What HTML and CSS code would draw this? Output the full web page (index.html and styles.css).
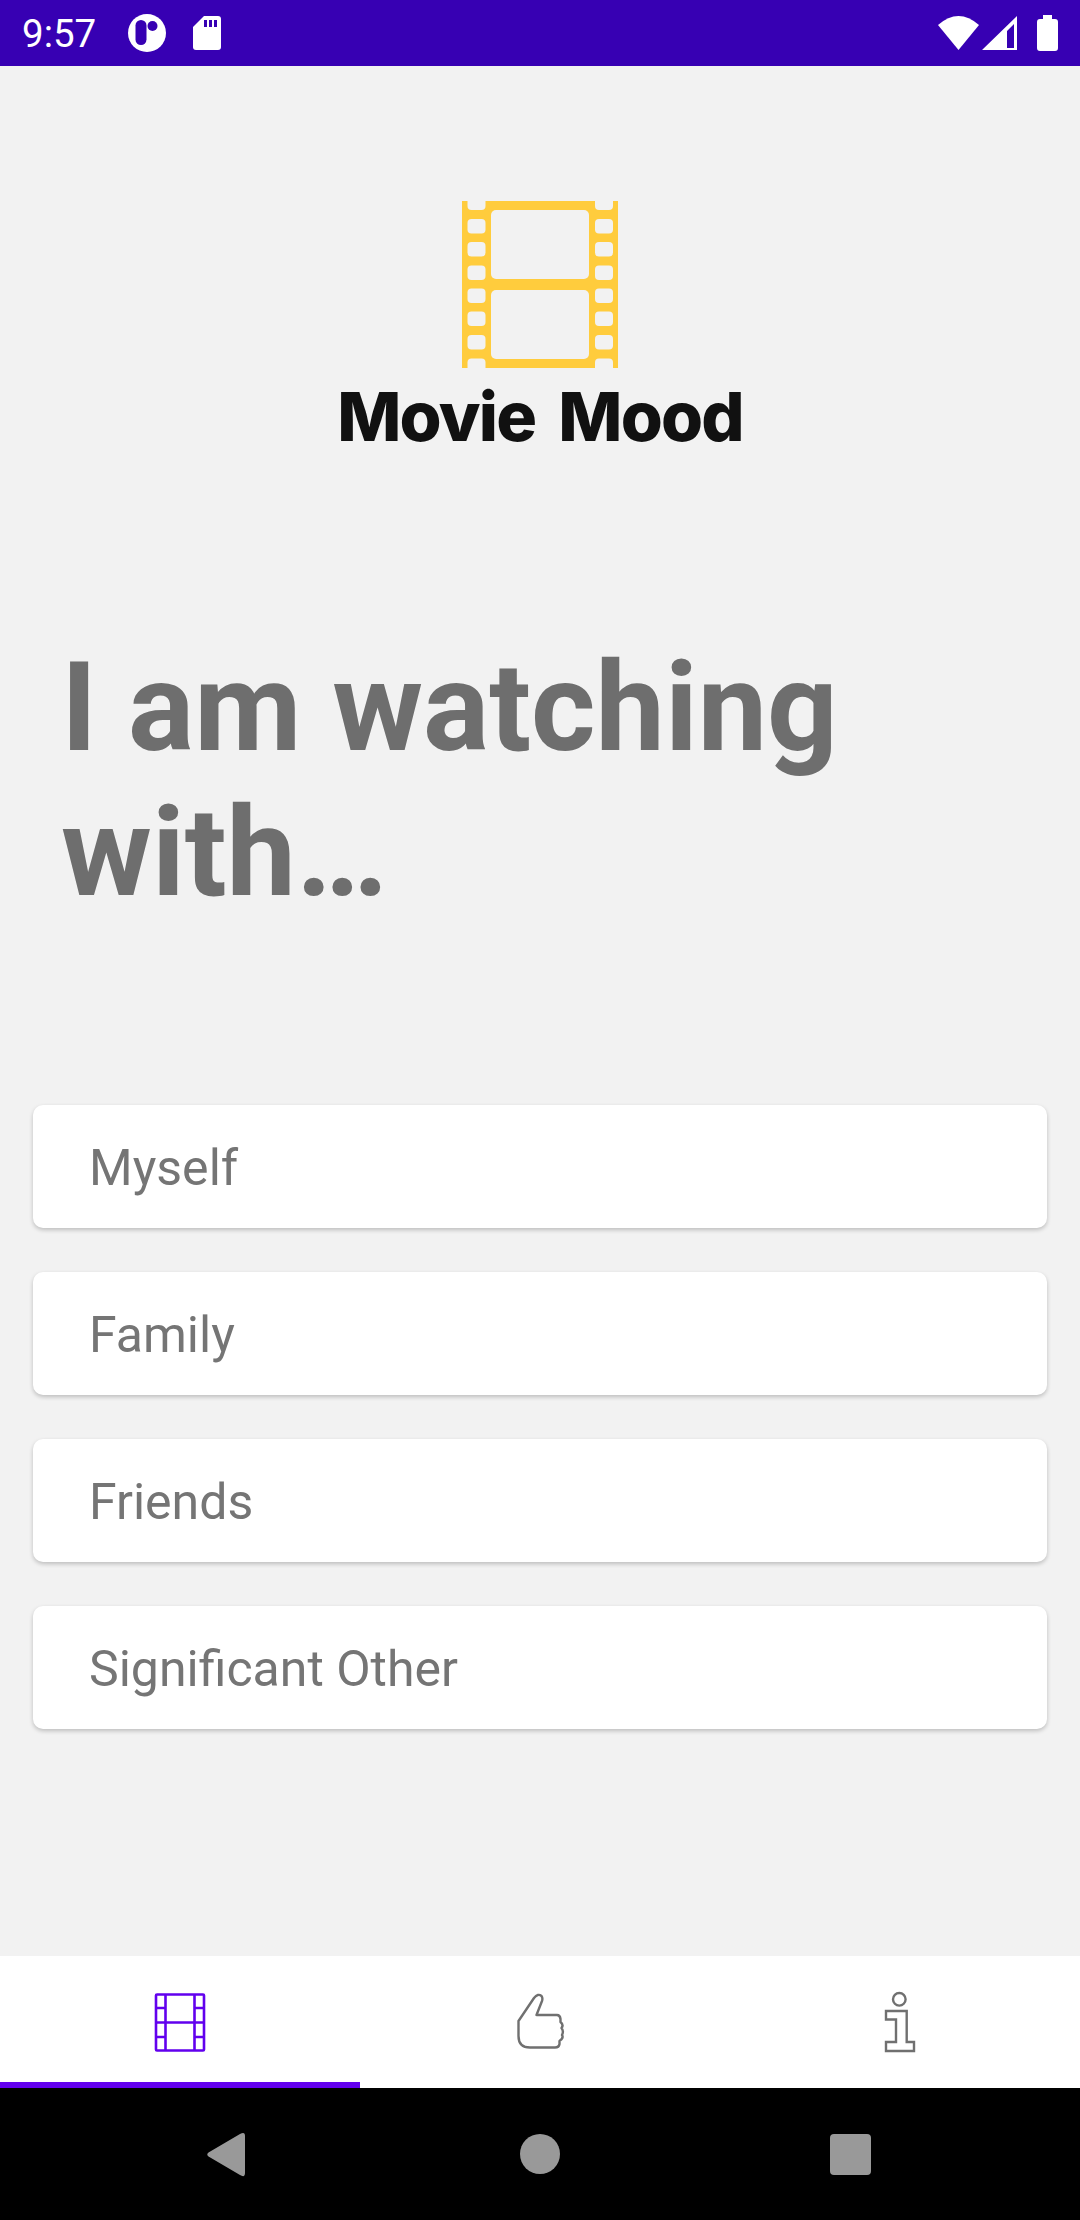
FILE: index.html
```html
<!DOCTYPE html>
<html lang="en">
<head>
    <meta charset="UTF-8">
    <meta name="viewport" content="width=device-width, initial-scale=1.0">
    <title>Movie Mood</title>
    <link rel="stylesheet" href="styles.css">
</head>
<body>
    <div class="phone">
        <div class="status-bar">
            <span class="clock">9:57</span>
            <svg class="status-icon" width="38" height="38" viewBox="0 0 38 38">
                <circle cx="19" cy="19" r="19" fill="#fff"/>
                <rect x="7.500" y="6" width="11" height="25" rx="5.500" fill="#3700b3"/>
                <circle cx="24.500" cy="12" r="5" fill="#3700b3"/>
            </svg>
            <svg class="status-icon sd-icon" width="28" height="34" viewBox="0 0 28 34">
                <path d="M11 0H25Q28 0 28 3V31Q28 34 25 34H3Q0 34 0 31V11Z" fill="#fff"/>
                <path d="M11 4h3v7h-3zM16 4h3v7h-3zM21 4h3v7h-3z" fill="#3700b3"/>
            </svg>
            <span class="status-spacer"></span>
            <svg class="status-icon" width="41" height="34" viewBox="0 0 41 34">
                <path d="M0 9Q20.500 -9 41 9L20.500 34Z" fill="#fff"/>
            </svg>
            <svg class="status-icon signal-icon" width="35" height="34" viewBox="0 0 35 34">
                <path d="M35 0V34H0ZM32 8 25 15V32H32Z" fill="#fff" fill-rule="evenodd"/>
            </svg>
            <svg class="status-icon battery-icon" width="21" height="36" viewBox="0 0 21 36">
                <path d="M6 0H15V4H18Q21 4 21 7V33Q21 36 18 36H3Q0 36 0 33V7Q0 4 3 4H6Z" fill="#fff"/>
            </svg>
        </div>

        <main class="content">
            <div class="logo">
                <svg width="156" height="167" viewBox="0 0 156 167">
                    <rect width="156" height="167" fill="#ffcc3d"/>
                    <g fill="#f2f2f2">
                        <rect x="29" y="9" width="98" height="69" rx="5"/>
                        <rect x="29" y="89" width="98" height="69" rx="5"/>
                        <rect x="5.500" y="-8" width="18" height="17" rx="4"/>
                        <rect x="5.500" y="18" width="18" height="14.500" rx="4"/>
                        <rect x="5.500" y="41" width="18" height="14.500" rx="4"/>
                        <rect x="5.500" y="64.500" width="18" height="14.500" rx="4"/>
                        <rect x="5.500" y="87.500" width="18" height="14.500" rx="4"/>
                        <rect x="5.500" y="110.500" width="18" height="14.500" rx="4"/>
                        <rect x="5.500" y="134" width="18" height="14.500" rx="4"/>
                        <rect x="5.500" y="157.500" width="18" height="17" rx="4"/>
                        <rect x="133" y="-8" width="18" height="17" rx="4"/>
                        <rect x="133" y="18" width="18" height="14.500" rx="4"/>
                        <rect x="133" y="41" width="18" height="14.500" rx="4"/>
                        <rect x="133" y="64.500" width="18" height="14.500" rx="4"/>
                        <rect x="133" y="87.500" width="18" height="14.500" rx="4"/>
                        <rect x="133" y="110.500" width="18" height="14.500" rx="4"/>
                        <rect x="133" y="134" width="18" height="14.500" rx="4"/>
                        <rect x="133" y="157.500" width="18" height="17" rx="4"/>
                    </g>
                </svg>
                <div class="logo-name">Movie Mood</div>
            </div>

            <h1 class="question">I am watching with…</h1>

            <div class="choices">
                <div class="choice">Myself</div>
                <div class="choice">Family</div>
                <div class="choice">Friends</div>
                <div class="choice">Significant Other</div>
            </div>
        </main>

        <nav class="tabs">
            <div class="tab active">
                <svg width="52" height="61" viewBox="0 0 52 61" fill="none" stroke="#6200ee" stroke-width="2.600">
                    <rect x="2" y="2.500" width="48" height="56" rx="1"/>
                    <path d="M11.500 2.500V58.500M40.500 2.500V58.500M2 30.500H50M2 16H11.500M2 45H11.500M40.500 16H50M40.500 45H50"/>
                </svg>
            </div>
            <div class="tab">
                <svg width="50" height="58" viewBox="35 33 50 58" fill="none" stroke="#707070" stroke-width="2.400" stroke-linejoin="round">
                    <path d="M38.500 61 54 38Q58 33 61.500 36 63 38 62 41L56.500 55H77Q80 55 80.500 59V62Q84 65 81.500 68 84 71 82 75 84 78 79.500 81V84Q79 87.500 75 87.500H50Q38.500 87.500 38.500 76Z"/>
                </svg>
            </div>
            <div class="tab">
                <svg width="32" height="66" viewBox="404 29 32 66" fill="none" stroke="#707070" stroke-width="2.400">
                    <circle cx="419.300" cy="39.300" r="6.300"/>
                    <path d="M406 51H426.700V82H434V91H406V82H416V59.500H406Z"/>
                </svg>
            </div>
        </nav>

        <div class="nav-bar">
            <svg width="38" height="45" viewBox="0 0 38 45"><path d="M1.500 20.500 33 2Q38 -1 38 4V41Q38 46 33 43L1.500 24.500Q-1 22.500 1.500 20.500Z" fill="#999"/></svg>
            <span class="nav-home"></span>
            <span class="nav-recent"></span>
        </div>
    </div>
</body>
</html>
```

FILE: styles.css
```css
* {
    margin: 0;
    padding: 0;
    box-sizing: border-box;
}

body {
    font-family: Roboto, sans-serif;
    background: #f2f2f2;
}

.phone {
    width: 1080px;
    height: 2220px;
    display: flex;
    flex-direction: column;
    overflow: hidden;
}

.status-bar {
    height: 66px;
    flex-shrink: 0;
    background: #3700b3;
    color: white;
    display: flex;
    align-items: center;
    padding: 0 22px 0 22px;
}

.clock {
    font-size: 38.500px;
    width: 105.500px;
}

.status-icon {
    display: block;
}

.sd-icon {
    margin-left: 27px;
}

.status-spacer {
    flex: 1;
}

.signal-icon {
    margin-left: 3px;
}

.battery-icon {
    margin-left: 20px;
}

.content {
    flex: 1;
    background: #f2f2f2;
    padding: 135px 33px 0;
}

.logo {
    display: flex;
    flex-direction: column;
    align-items: center;
}

.logo svg {
    display: block;
}

.logo-name {
    font-family: Inter, sans-serif;
    font-weight: 800;
    font-size: 68px;
    line-height: 84px;
    letter-spacing: -1.800px;
    word-spacing: 10px;
    color: #111;
    margin-top: 6px;
}

.question {
    font-size: 123.750px;
    font-weight: 700;
    line-height: 145px;
    color: #6e6e6e;
    margin: 177px 0 0 28px;
    width: 900px;
}

.choices {
    display: flex;
    flex-direction: column;
    gap: 44px;
    margin-top: 180px;
}

.choice {
    height: 123px;
    background: white;
    border-radius: 10px;
    box-shadow: 0 2px 4px rgba(0, 0, 0, 0.22);
    display: flex;
    align-items: center;
    padding: 3px 0 0 56px;
    font-size: 50px;
    color: #757575;
}

.tabs {
    height: 132px;
    flex-shrink: 0;
    background: white;
    display: flex;
}

.tab {
    flex: 1;
    display: flex;
    align-items: center;
    justify-content: center;
}

.tab.active {
    padding-top: 6px;
    border-bottom: 6px solid #6200ee;
}

.nav-bar {
    height: 132px;
    flex-shrink: 0;
    background: black;
    display: flex;
    align-items: center;
    padding-left: 207px;
}

.nav-home {
    width: 40px;
    height: 40px;
    margin: 0 270px 0 275px;
    border-radius: 50%;
    background: #999;
}

.nav-recent {
    width: 41px;
    height: 41px;
    border-radius: 4px;
    background: #999;
}
```
